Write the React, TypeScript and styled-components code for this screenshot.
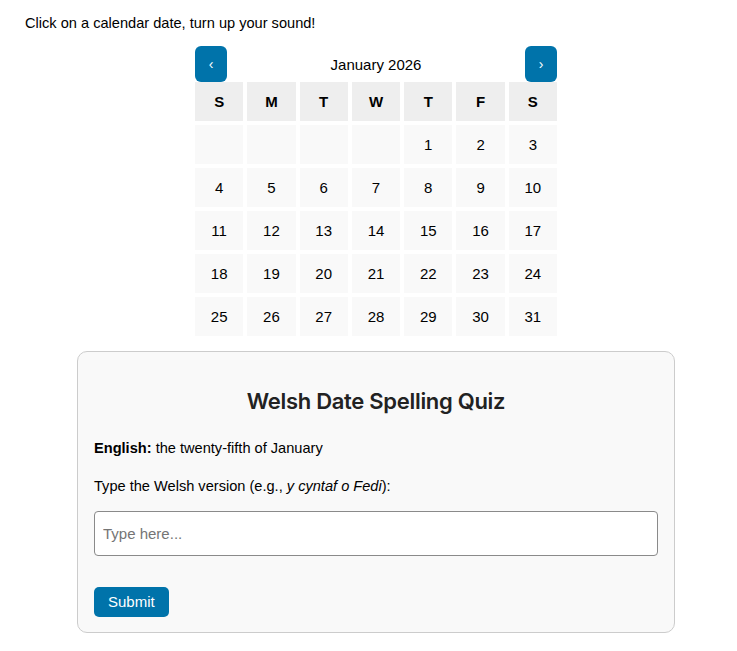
import React, { useState } from "react";
import styled, { createGlobalStyle } from "styled-components";

const GlobalStyle = createGlobalStyle`
  body {
    margin: 0;
    background: #fff;
    font-family: "Liberation Sans", Arial, sans-serif;
    color: #000;
  }
`;

const Page = styled.div`
  padding: 13px 10px 16px 25px;
`;

const Intro = styled.p`
  margin: 0 0 13px;
  font-size: 14.6px;
  line-height: 20px;
`;

const Calendar = styled.div`
  width: 362px;
  margin: 0 auto;
`;

const CalHeader = styled.div`
  display: flex;
  align-items: center;
  justify-content: space-between;
`;

const NavButton = styled.button`
  width: 32px;
  height: 36px;
  border: none;
  border-radius: 6px;
  background: #0073aa;
  color: #fff;
  font-family: "Liberation Sans", Arial, sans-serif;
  font-size: 14px;
  padding: 0;
  cursor: pointer;
`;

const MonthTitle = styled.div`
  font-size: 15px;
`;

const Grid = styled.div`
  display: grid;
  grid-template-columns: repeat(7, 1fr);
  gap: 4.5px 4px;
`;

const Cell = styled.div<{ $head?: boolean; $empty?: boolean }>`
  height: 38.5px;
  display: flex;
  align-items: center;
  justify-content: center;
  background: ${(p) => (p.$head ? "#eeeeee" : "#f9f9f9")};
  font-weight: ${(p) => (p.$head ? "bold" : "normal")};
  font-size: 15px;
  cursor: ${(p) => (p.$head || p.$empty ? "default" : "pointer")};
`;

const Card = styled.div`
  width: 598px;
  box-sizing: border-box;
  margin: 15px auto 0;
  background: #f9f9f9;
  border: 1px solid #cccccc;
  border-radius: 10px;
  padding: 24px 16px 15px;
`;

const Title = styled.h2`
  margin: 12px 0 24px;
  text-align: center;
  font-family: Inter, "Noto Sans", sans-serif;
  font-weight: 600;
  font-size: 22px;
  color: #222;
  letter-spacing: -0.3px;
`;

const Line = styled.p<{ $last?: boolean }>`
  margin: 0 0 ${(p) => (p.$last ? "15px" : "18px")};
  font-size: 14.6px;
  line-height: 20px;
`;

const Input = styled.input`
  display: block;
  width: 100%;
  box-sizing: border-box;
  height: 45px;
  padding: 0 8px;
  border: 1px solid #8a8a8a;
  border-radius: 4px;
  background: #fff;
  font-family: "Liberation Sans", Arial, sans-serif;
  font-size: 15px;
  &::placeholder {
    color: #757575;
  }
`;

const Submit = styled.button`
  margin-top: 31px;
  height: 30px;
  padding: 0 14px;
  border: none;
  border-radius: 5px;
  background: #0073aa;
  color: #fff;
  font-family: "Liberation Sans", Arial, sans-serif;
  font-size: 15px;
  cursor: pointer;
`;

const days = ["S", "M", "T", "W", "T", "F", "S"];

export default function App() {
  const [answer, setAnswer] = useState("");
  const offset = 4;
  const cells: (number | null)[] = [];
  for (let i = 0; i < offset; i++) cells.push(null);
  for (let d = 1; d <= 31; d++) cells.push(d);

  return (
    <Page>
      <GlobalStyle />
      <Intro>Click on a calendar date, turn up your sound!</Intro>
      <Calendar>
        <CalHeader>
          <NavButton>‹</NavButton>
          <MonthTitle>January 2026</MonthTitle>
          <NavButton>›</NavButton>
        </CalHeader>
        <Grid>
          {days.map((d, i) => (
            <Cell key={"h" + i} $head>
              {d}
            </Cell>
          ))}
          {cells.map((d, i) => (
            <Cell key={i} $empty={d === null}>
              {d}
            </Cell>
          ))}
        </Grid>
      </Calendar>
      <Card>
        <Title>Welsh Date Spelling Quiz</Title>
        <Line>
          <strong>English:</strong> the twenty-fifth of January
        </Line>
        <Line $last>
          Type the Welsh version (e.g., <em>y cyntaf o Fedi</em>):
        </Line>
        <Input
          placeholder="Type here..."
          value={answer}
          onChange={(e) => setAnswer(e.target.value)}
        />
        <Submit>Submit</Submit>
      </Card>
    </Page>
  );
}
